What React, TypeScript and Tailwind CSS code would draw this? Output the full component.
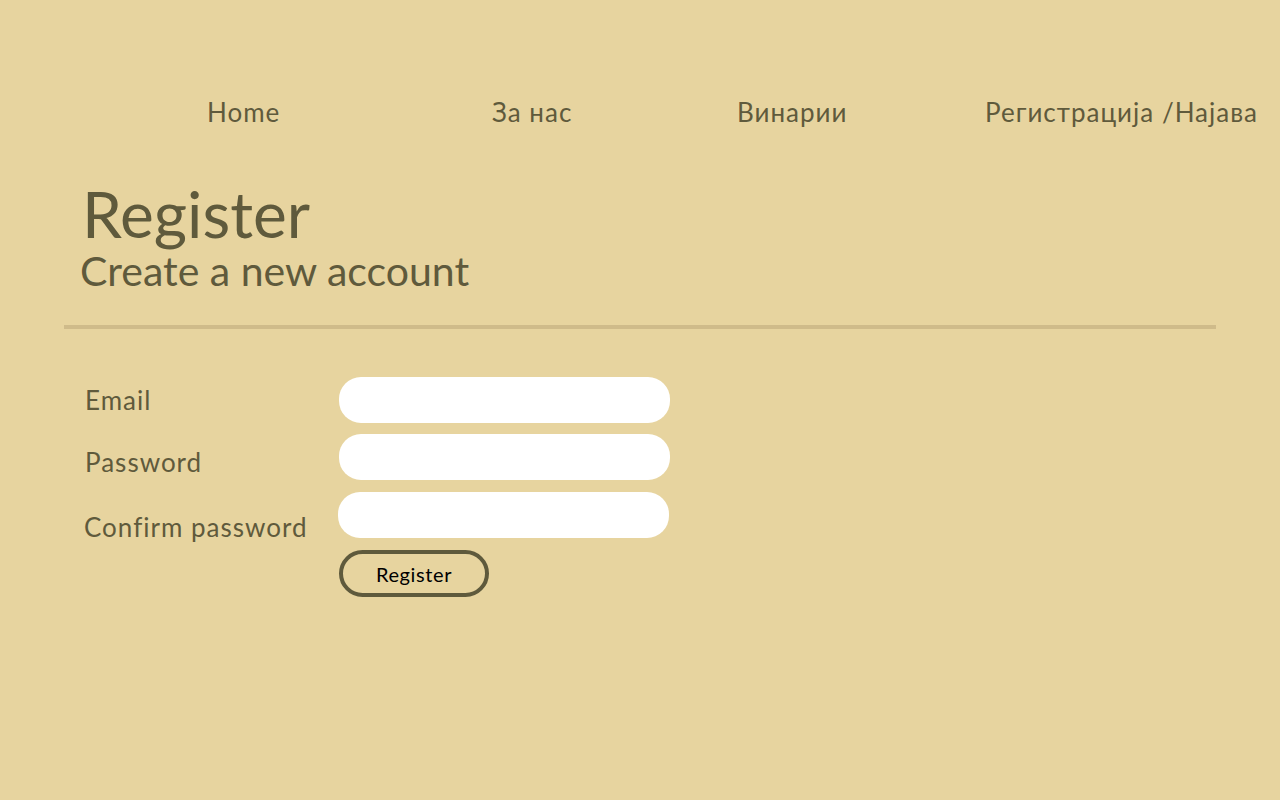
import React from "react";

export default function App() {
  const font = { fontFamily: '"Lato", "Open Sans", sans-serif' };
  return (
    <div className="min-h-screen w-full bg-[#e7d49f] text-[#5f5a3c]" style={font}>
      <nav className="flex pt-[94px] text-[26px] leading-[36px] tracking-[1px]">
        <div className="w-[285px] ml-[207px]">Home</div>
        <div className="w-[245px]">За нас</div>
        <div className="w-[248px]">Винарии</div>
        <div className="whitespace-nowrap">Регистрација /Најава</div>
      </nav>
      <div className="mx-[64px] mt-[48px] w-[1152px]">
        <div className="pl-[18px]">
          <h1 className="text-[64px] leading-[72px]">Register</h1>
          <h2 className="text-[41px] leading-[44px] -mt-[1px] -ml-[2px]">Create a new account</h2>
        </div>
        <div className="mt-[32px] h-[4px] bg-[#cfbb8a]" />
        <form className="mt-[48px] pl-[21px] flex flex-col">
          <div className="flex items-center h-[46px]">
            <label className="w-[254px] text-[26px] tracking-[1px]">Email</label>
            <input className="w-[331px] h-[46px] rounded-[22px] bg-white outline-none" />
          </div>
          <div className="flex items-center h-[46px] mt-[11px]">
            <label className="w-[254px] text-[26px] tracking-[1px] mt-[10px]">Password</label>
            <input type="password" className="w-[331px] h-[46px] rounded-[22px] bg-white outline-none" />
          </div>
          <div className="flex items-center h-[46px] mt-[12px]">
            <label className="w-[254px] text-[26px] tracking-[1px] mt-[24px] -ml-[1px] whitespace-nowrap">Confirm password</label>
            <input type="password" className="w-[331px] h-[46px] rounded-[22px] bg-white outline-none" />
          </div>
          <div className="flex mt-[12px]">
            <div className="w-[254px]" />
            <button type="button" className="w-[150px] h-[47px] rounded-[24px] border-4 border-[#5f5a3c] text-black text-[20px] tracking-[0.6px]">
              Register
            </button>
          </div>
        </form>
      </div>
    </div>
  );
}
